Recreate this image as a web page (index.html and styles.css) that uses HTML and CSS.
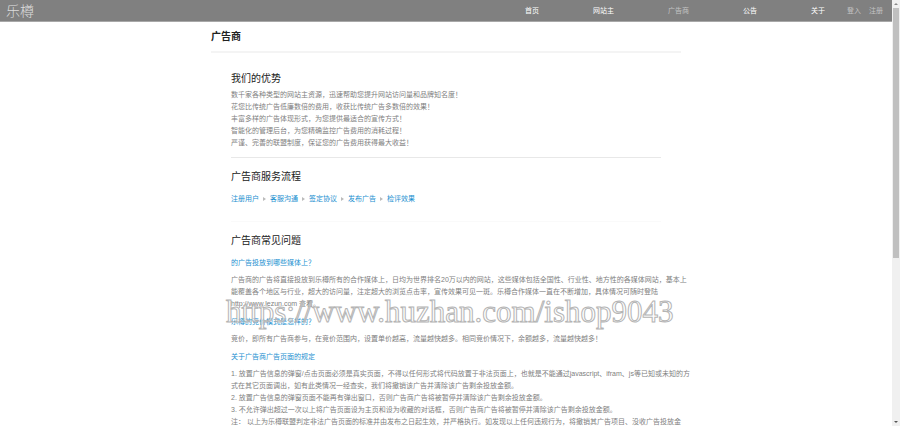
FILE: index.html
```html
<!DOCTYPE html>
<html lang="zh-CN">
<head>
<meta charset="utf-8">
<title>广告商</title>
<link rel="stylesheet" href="styles.css">
</head>
<body>
<div class="page">
  <header class="topbar">
    <a class="logo" href="#">乐樽</a>
    <nav class="menu">
      <a href="#">首页</a>
      <a href="#">网站主</a>
      <a class="dim" href="#">广告商</a>
      <a href="#">公告</a>
      <a href="#">关于</a>
    </nav>
    <div class="account">
      <a href="#">登入</a>
      <a href="#">注册</a>
    </div>
  </header>
  <main class="content">
    <h1>广告商</h1>
    <section class="advantages">
      <h2>我们的优势</h2>
      <p>数千家各种类型的网站主资源，迅速帮助您提升网站访问量和品牌知名度！<br>
      花您比传统广告低廉数倍的费用，收获比传统广告多数倍的效果！<br>
      丰富多样的广告体现形式，为您提供最适合的宣传方式！<br>
      智能化的管理后台，为您精确监控广告费用的消耗过程！<br>
      严谨、完善的联盟制度，保证您的广告费用获得最大收益！</p>
    </section>
    <section class="process">
      <h2>广告商服务流程</h2>
      <ol class="steps">
        <li>注册用户</li>
        <li>客服沟通</li>
        <li>签定协议</li>
        <li>发布广告</li>
        <li>检评效果</li>
      </ol>
    </section>
    <section class="faq">
      <h2>广告商常见问题</h2>
      <h3>的广告投放到哪些媒体上？</h3>
      <p>广告商的广告将直接投放到乐樽所有的合作媒体上，日均为世界排名20万以内的网站，这些媒体包括全国性、行业性、地方性的各媒体网站，基本上<br>
      能覆盖各个地区与行业，超大的访问量，注定超大的浏览点击率，宣传效果可见一斑。乐樽合作媒体一直在不断增加，具体情况可随时登陆<br>
      http://www.lezun.com 查看。</p>
      <h3>乐樽的竞价模式是怎样的？</h3>
      <p>竞价，即所有广告商参与，在竞价范围内，设置单价越高，流量越快越多。相同竞价情况下，余额越多，流量越快越多！</p>
      <h3>关于广告商广告页面的规定</h3>
      <p>1. 放置广告信息的弹窗/点击页面必须是真实页面，不得以任何形式将代码放置于非法页面上，也就是不能通过javascript、ifram、js等已知或未知的方<br>
      式在其它页面调出，如有此类情况一经查实，我们将撤销该广告并清除该广告剩余投放金额。<br>
      2. 放置广告信息的弹窗页面不能再有弹出窗口，否则广告商广告将被暂停并清除该广告剩余投放金额。<br>
      3. 不允许弹出超过一次以上将广告页面设为主页和设为收藏的对话框，否则广告商广告将被暂停并清除该广告剩余投放金额。<br>
      注： 以上为乐樽联盟判定非法广告页面的标准并由发布之日起生效，并严格执行。如发现以上任何违规行为，将撤销其广告项目、没收广告投放金</p>
    </section>
    <div class="watermark">https://www.huzhan.com/ishop9043</div>
  </main>
</div>
<div class="scrollbar" aria-hidden="true">
  <svg class="arrow" viewBox="0 0 8 8"><path d="M2 5L4 3L6 5Z" fill="#888"/></svg>
  <div class="track"><div class="thumb"></div></div>
  <svg class="arrow" viewBox="0 0 8 8"><path d="M2 3L4 5L6 3Z" fill="#555"/></svg>
</div>
</body>
</html>
```
FILE: styles.css
```css
* {
  box-sizing: border-box;
}

body {
  margin: 0;
  height: 100vh;
  display: flex;
  overflow: hidden;
  background: #fff;
  color: #808080;
  font-family: "Liberation Sans", "Noto Sans CJK SC", sans-serif;
  font-size: 7px;
  line-height: 12px;
}

.page {
  flex: 1;
  min-width: 0;
  overflow: hidden;
}

.topbar {
  display: flex;
  align-items: center;
  height: 22px;
  padding: 0 9px 0 6px;
  background: #808080;
  border-bottom: 1px solid #a8a8a8;
}

.topbar a {
  color: #fff;
  text-decoration: none;
}

.topbar .logo {
  margin-right: auto;
  color: #ddd;
  font-size: 14px;
  font-weight: 300;
  line-height: 20px;
}

.menu {
  display: flex;
  gap: 54px;
}

.topbar .dim,
.topbar .account a {
  color: #c4c4c4;
}

.account {
  display: flex;
  gap: 8px;
  margin-left: 22px;
}

.content {
  position: relative;
  max-width: 470px;
  margin: 0 auto;
  white-space: nowrap;
}

h1,
h2,
h3,
p,
ol {
  margin: 0;
  padding: 0;
}

h1 {
  color: #222;
  font-size: 10px;
  line-height: 29px;
  border-bottom: 2px solid #f4f4f4;
}

section {
  margin: 0 20px;
}

h2 {
  color: #222;
  font-size: 10px;
  font-weight: 400;
  line-height: 12px;
}

.advantages {
  padding: 20px 0 8px;
  border-bottom: 1px solid #e8e8e8;
}

.advantages h2 {
  margin-bottom: 4px;
}

.process {
  padding: 13px 0 16px;
  border-bottom: 1px solid #fafafa;
}

.process h2,
.faq h2 {
  margin-bottom: 10px;
}

.steps {
  display: flex;
  gap: 4px;
  list-style: none;
  color: #1a8fd0;
}

.steps li {
  display: flex;
  align-items: center;
  gap: 4px;
}

.steps li + li::before {
  content: "";
  border: 2px solid transparent;
  border-left: 3px solid #bbb;
  border-right: 0;
}

.faq {
  padding-top: 13px;
}

.faq h3 {
  margin-bottom: 5px;
  color: #1a8fd0;
  font-size: 7px;
  font-weight: 400;
}

.faq p {
  margin-bottom: 6px;
}

.watermark {
  position: absolute;
  top: 272px;
  left: 15px;
  color: rgba(255, 255, 255, 0.5);
  font-family: "Liberation Serif", serif;
  font-size: 31px;
  line-height: 36px;
  -webkit-text-stroke: 1px #b4b4b4;
}

.scrollbar {
  display: flex;
  flex-direction: column;
  width: 8px;
  background: #f0f0f0;
}

.arrow {
  display: block;
  width: 8px;
  height: 8px;
}

.track {
  flex: 1;
  padding: 0 1px;
}

.thumb {
  height: 61%;
  background: #c0c0c0;
}
```
